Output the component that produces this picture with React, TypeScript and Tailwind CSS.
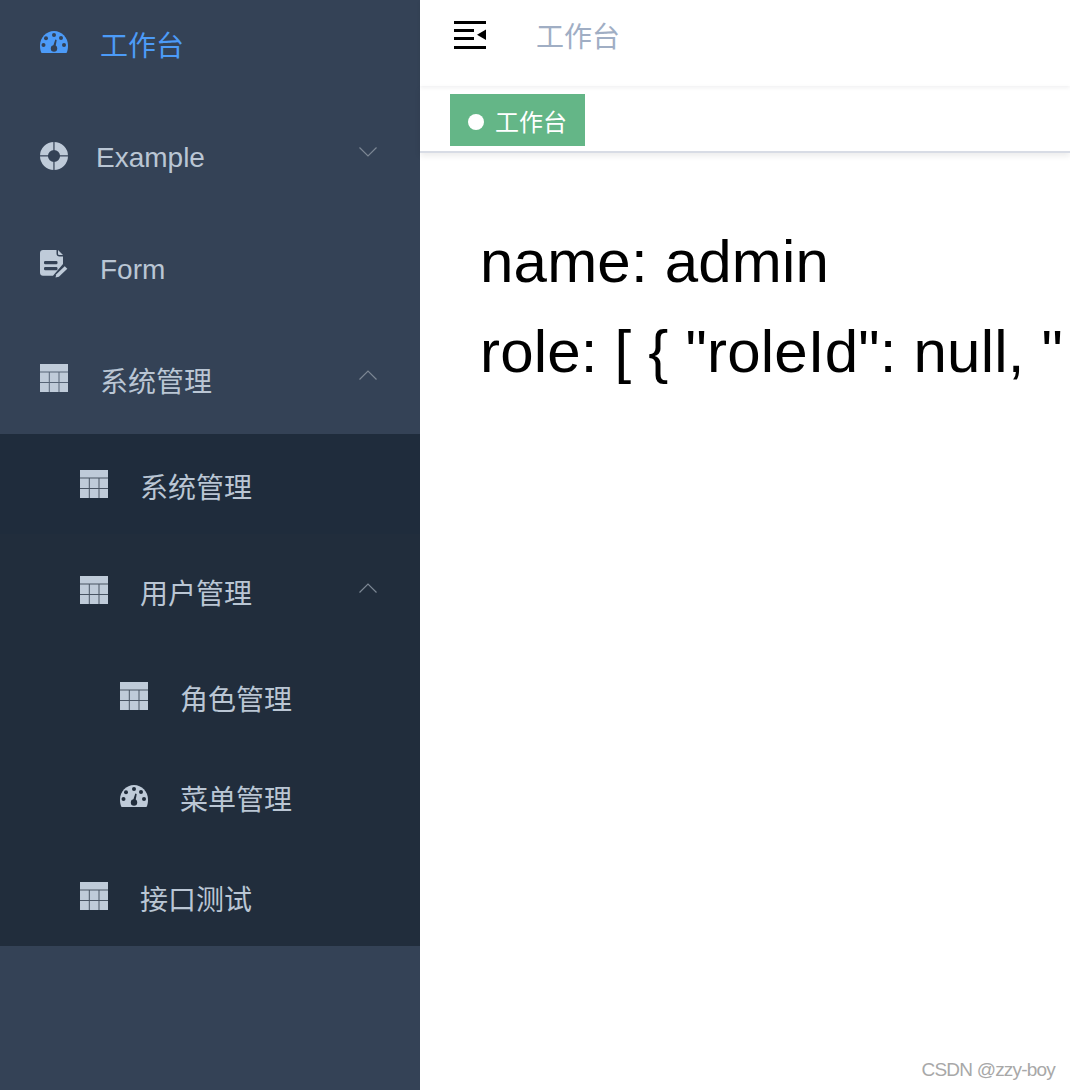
import type { ReactNode } from 'react'

const fontCls = "font-['Liberation_Sans','Noto_Sans_CJK_SC',sans-serif]"

function GaugeIcon({ className }: { className: string }) {
  return (
    <svg viewBox="0 0 28 22" className={className}>
      <path
        fill="currentColor"
        d="M1.500 22C.500 20 0 17.500 0 14.500 0 6.500 6.300 0 14 0s14 6.500 14 14.500c0 3-.5 5.500-1.500 7.500h-25z"
      />
      <g fill="var(--dot)">
        <circle cx="14" cy="4" r="2" />
        <circle cx="6" cy="7.200" r="2" />
        <circle cx="21" cy="7" r="2" />
        <circle cx="3.500" cy="14" r="2" />
        <circle cx="24" cy="14" r="2" />
        <circle cx="14" cy="17.500" r="3.200" />
        <path d="M15.300 8.500l1.400.4-1.200 7-2.400-.6z" />
      </g>
    </svg>
  )
}

function TableIcon({ className }: { className: string }) {
  return (
    <svg viewBox="0 0 28 28" className={className}>
      <rect width="28" height="28" fill="currentColor" />
      <g fill="var(--line)" opacity="0.75">
        <rect x="0" y="7.500" width="28" height="1" />
        <rect x="0" y="18" width="28" height="1" />
        <rect x="8.800" y="8" width="1" height="20" />
        <rect x="18.500" y="8" width="1" height="20" />
      </g>
    </svg>
  )
}

function RingIcon() {
  return (
    <svg viewBox="0 0 30 30" className="h-[30px] w-[30px] text-[#bfcbd9]">
      <path
        fill="currentColor"
        fillRule="evenodd"
        d="M15 0a15 15 0 1 1 0 30a15 15 0 1 1 0-30zM15 8.500a6.500 6.500 0 1 0 0 13a6.500 6.500 0 1 0 0-13z"
      />
      <g fill="#344256">
        <rect x="0" y="14.200" width="9" height="1.300" />
        <rect x="21" y="14.200" width="9" height="1.300" />
        <rect x="14.300" y="0" width="1.300" height="9" />
        <rect x="14.300" y="21" width="1.300" height="9" />
      </g>
    </svg>
  )
}

function FormIcon() {
  return (
    <svg viewBox="0 0 28 28" className="h-7 w-7 text-[#bfcbd9]">
      <path
        fill="currentColor"
        d="M3 0h13.500v3.500c0 2 1 3 3 3H23v7.500L13 25.800H3c-1.700 0-3-1.300-3-3V3c0-1.700 1.300-3 3-3z"
      />
      <path fill="currentColor" d="M18 0l5 5h-3.500c-1 0-1.500-.5-1.500-1.500z" />
      <rect x="4" y="11" width="13.500" height="3.200" rx="1.200" fill="#344256" />
      <rect x="4" y="17" width="13.500" height="3.200" rx="1.200" fill="#344256" />
      <path fill="currentColor" d="M15.500 27.500l.8-3.200 8.400-8 2.600 2.400-8.400 8z" />
    </svg>
  )
}

function Chevron({ up, className }: { up?: boolean; className: string }) {
  return (
    <svg viewBox="0 0 18 10" className={`absolute right-[43px] h-2.5 w-[18px] ${className}`} fill="none">
      <path
        d={up ? 'M.500 9.500L9 1l8.500 8.500' : 'M.500.500L9 9l8.500-8.500'}
        stroke="#7c8794"
        strokeWidth="1.200"
      />
    </svg>
  )
}

function MenuRow({
  icon,
  label,
  pad,
  gap = 'ml-8',
  tall,
  arrow,
  arrowCls = 'top-[-10px]',
  active,
  iconCls = '',
  textCls = 'pt-[10px]',
  rowCls = '',
}: {
  icon: ReactNode
  label: string
  pad: string
  gap?: string
  tall?: boolean
  arrow?: 'up' | 'down'
  arrowCls?: string
  active?: boolean
  iconCls?: string
  textCls?: string
  rowCls?: string
}) {
  return (
    <div className={`flex items-center ${tall ? 'h-[112px]' : 'h-[100px]'} ${pad} ${rowCls}`}>
      <span className={`flex w-7 shrink-0 justify-center ${iconCls}`}>{icon}</span>
      <span className={`${gap} ${textCls} text-[28px] ${active ? 'text-[#4c9bf8]' : 'text-[#bac6d4]'}`}>
        {label}
      </span>
      {arrow && (
        <span className="relative ml-auto h-0 w-0 self-center">
          <Chevron up={arrow === 'up'} className={arrowCls} />
        </span>
      )}
    </div>
  )
}

export default function App() {
  const table = <TableIcon className="h-7 w-7 text-[#bfcbd9]" />
  return (
    <div className={`relative flex h-[1090px] w-[1070px] overflow-hidden bg-white ${fontCls}`}>
      <aside className="w-[420px] shrink-0 overflow-hidden bg-[#344256]">
        <div className="mt-[-12px] [--line:#344256]">
          <MenuRow
            pad="pl-10"
            tall
            active
            textCls="pt-[6px]"
            iconCls="pb-1 [--dot:#344256]"
            icon={<GaugeIcon className="h-[22px] w-7 text-[#4c9bf8]" />}
            label="工作台"
          />
          <MenuRow
            pad="pl-10"
            gap="ml-[28px]"
            tall
            arrow="down"
            arrowCls="top-[-9px]"
            textCls="pt-1"
            icon={<RingIcon />}
            label="Example"
          />
          <MenuRow pad="pl-10" tall textCls="pt-1" iconCls="pb-2" icon={<FormIcon />} label="Form" />
          <MenuRow
            pad="pl-10"
            tall
            arrow="up"
            textCls="pt-[5px]"
            iconCls="pb-1"
            icon={table}
            label="系统管理"
          />
        </div>
        <div className="mt-[-2px] bg-[#212d3c] [--line:#212d3c]">
          <MenuRow pad="pl-20" rowCls="bg-[#1f2c3c]" icon={table} label="系统管理" />
          <MenuRow pad="pl-20" tall arrow="up" arrowCls="top-[-7px]" icon={table} label="用户管理" />
          <MenuRow pad="pl-[120px]" icon={table} label="角色管理" />
          <MenuRow
            pad="pl-[120px]"
            iconCls="[--dot:#212d3c]"
            icon={<GaugeIcon className="h-[22px] w-7 text-[#bfcbd9]" />}
            label="菜单管理"
          />
          <MenuRow pad="pl-20" icon={table} label="接口测试" />
        </div>
      </aside>

      <main className="min-w-0 flex-1">
        <header className="relative z-10 flex h-[86px] items-start pl-[34px] shadow-[0_2px_4px_rgba(0,21,41,0.06)]">
          <svg viewBox="0 0 32 28" className="mt-[21px] h-7 w-8" fill="#000">
            <rect x="0" y="0" width="32" height="3" />
            <rect x="0" y="8" width="20" height="3" />
            <rect x="0" y="16" width="20" height="3" />
            <rect x="0" y="25" width="32" height="3" />
            <path d="M32 8.500v10.500l-9-5.200z" />
          </svg>
          <span className="mt-[18px] ml-[51px] -translate-x-px text-[28px] leading-10 text-[#a0aec4]">工作台</span>
        </header>
        <nav className="flex h-[67px] items-start border-b-2 border-[#d8dce5] pt-2 pl-[30px] shadow-[0_3px_6px_rgba(0,0,0,0.08)]">
          <span className="flex h-[52px] w-[135px] items-center bg-[#64b687] pl-[18px] text-[24px] text-white">
            <span className="mt-1 h-4 w-4 rounded-full bg-white" />
            <span className="mt-[6px] ml-[11px]">工作台</span>
          </span>
        </nav>
        <div className="pt-[64px] pl-[60px] text-[60px] leading-[90px] tracking-[0.2px] whitespace-nowrap text-black">
          <div>name: admin</div>
          <div>role: [ {'{'} "roleId": null, "</div>
        </div>
      </main>

      <span className="absolute right-[15px] bottom-[6px] text-[19px] tracking-[-0.8px] text-[#a8a8a8]">
        CSDN @zzy-boy
      </span>
    </div>
  )
}
